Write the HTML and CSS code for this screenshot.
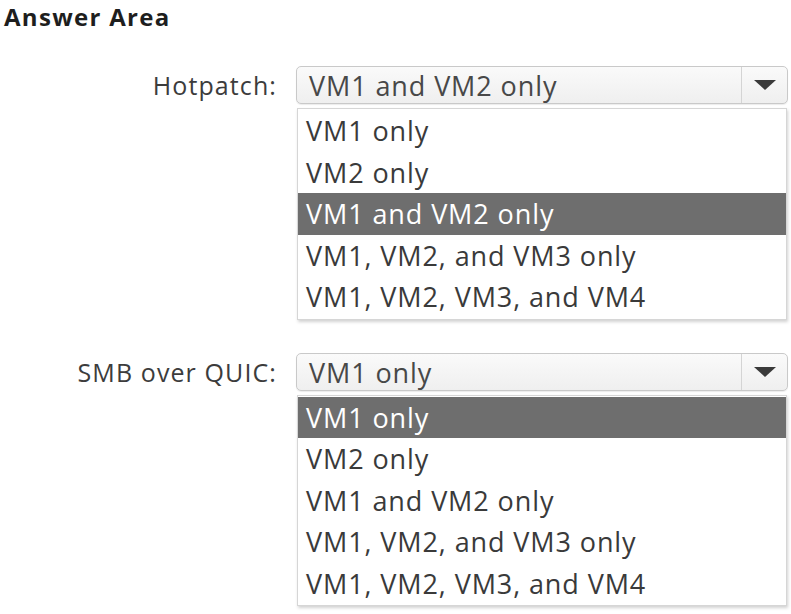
FILE: index.html
```html
<!DOCTYPE html>
<html>
<head>
<meta charset="utf-8">
<link rel="stylesheet" href="styles.css">
</head>
<body>
<h1 class="title">Answer Area</h1>
<div class="field field-first">
  <div class="label">Hotpatch:</div>
  <div class="control">
    <div class="select">
      <span class="value">VM1 and VM2 only</span>
      <span class="btn"><svg width="22" height="10" viewBox="0 0 22 10"><polygon points="0,0 22,0 11,10" fill="#3a3a3a"/></svg></span>
    </div>
    <ul class="list">
      <li>VM1 only</li>
      <li>VM2 only</li>
      <li class="sel">VM1 and VM2 only</li>
      <li>VM1, VM2, and VM3 only</li>
      <li>VM1, VM2, VM3, and VM4</li>
    </ul>
  </div>
</div>
<div class="field field-second">
  <div class="label">SMB over QUIC:</div>
  <div class="control">
    <div class="select">
      <span class="value">VM1 only</span>
      <span class="btn"><svg width="22" height="10" viewBox="0 0 22 10"><polygon points="0,0 22,0 11,10" fill="#3a3a3a"/></svg></span>
    </div>
    <ul class="list">
      <li class="sel">VM1 only</li>
      <li>VM2 only</li>
      <li>VM1 and VM2 only</li>
      <li>VM1, VM2, and VM3 only</li>
      <li>VM1, VM2, VM3, and VM4</li>
    </ul>
  </div>
</div>
</body>
</html>
```
FILE: styles.css
```css
html, body {
  margin: 0;
  padding: 0;
  background: #ffffff;
}
body {
  font-family: "Open Sans", "Noto Sans", sans-serif;
  color: #3a3a3a;
  width: 791px;
  height: 614px;
  overflow: hidden;
}
.title {
  margin: 0;
  padding: 0 0 0 4px;
  font-size: 24px;
  line-height: 33px;
  font-weight: 700;
  color: #1e1e1e;
  letter-spacing: 1.3px;
}
.field {
  display: flex;
  align-items: flex-start;
}
.field-first {
  margin-top: 33px;
}
.field-second {
  margin-top: 33px;
}
.label {
  width: 277px;
  flex: none;
  text-align: right;
  font-size: 25px;
  line-height: 38px;
  color: #3c3c3c;
  letter-spacing: 1.1px;
}
.control {
  margin-left: 19px;
  width: 492px;
}
.select {
  display: flex;
  height: 36px;
  border: 1px solid #c9c9c9;
  border-radius: 5px;
  background: linear-gradient(#fafafa, #efefef);
  box-shadow: 0 1px 1px rgba(0,0,0,0.08);
}
.value {
  flex: 1;
  padding-left: 12px;
  font-size: 27px;
  line-height: 38px;
  color: #484848;
  letter-spacing: 0.9px;
}
.btn {
  width: 45px;
  border-left: 1px solid #d4d4d4;
  display: flex;
  align-items: center;
  justify-content: center;
}
.list {
  list-style: none;
  margin: 4px 0 0 1px;
  padding: 1px 0;
  width: 488px;
  border: 1px solid #d6d6d6;
  background: #fff;
  box-shadow: 1px 2px 3px rgba(0,0,0,0.18);
}
.list li {
  height: 41.5px;
  line-height: 41px;
  padding-left: 8px;
  font-size: 27px;
  color: #3a3a3a;
  letter-spacing: 0.9px;
  white-space: nowrap;
}
.list li.sel {
  background: #6e6e6e;
  color: #ffffff;
}
```
